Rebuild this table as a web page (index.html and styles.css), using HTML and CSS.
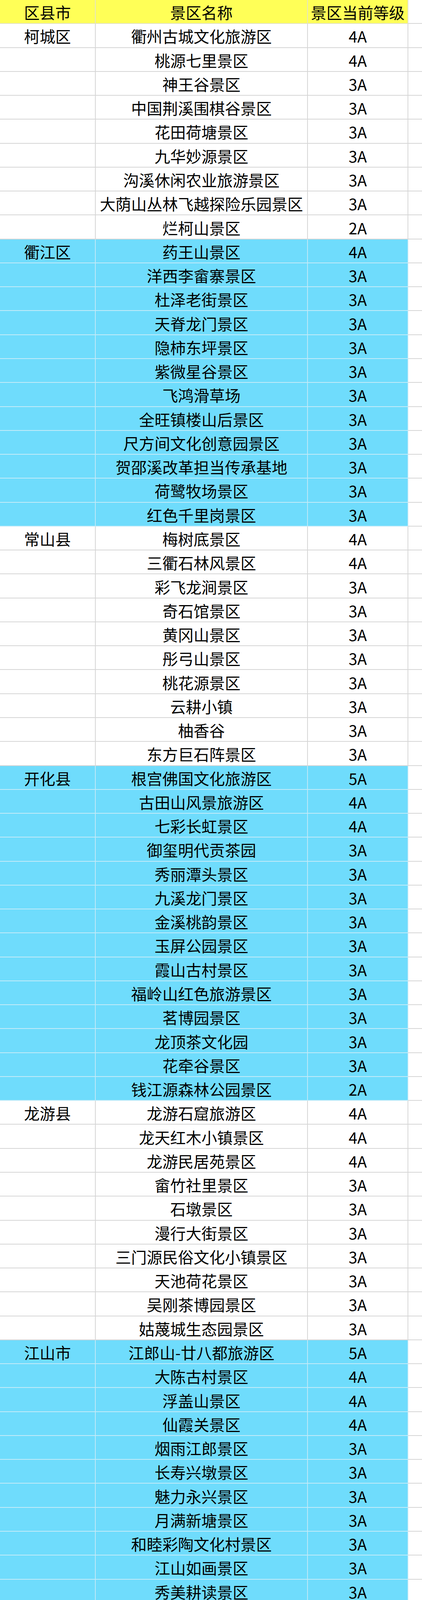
FILE: index.html
```html
<!DOCTYPE html>
<html lang="zh-CN">
<head>
<meta charset="utf-8">
<title>衢州景区等级</title>
<link rel="stylesheet" href="styles.css">
</head>
<body>
<div class="sheet">
  <div class="row head"><div class="c">区县市</div><div class="c">景区名称</div><div class="c">景区当前等级</div><div class="c x"></div></div>

  <div class="row"><div class="c">柯城区</div><div class="c">衢州古城文化旅游区</div><div class="c">4A</div><div class="c x"></div></div>
  <div class="row"><div class="c"></div><div class="c">桃源七里景区</div><div class="c">4A</div><div class="c x"></div></div>
  <div class="row"><div class="c"></div><div class="c">神王谷景区</div><div class="c">3A</div><div class="c x"></div></div>
  <div class="row"><div class="c"></div><div class="c">中国荆溪围棋谷景区</div><div class="c">3A</div><div class="c x"></div></div>
  <div class="row"><div class="c"></div><div class="c">花田荷塘景区</div><div class="c">3A</div><div class="c x"></div></div>
  <div class="row"><div class="c"></div><div class="c">九华妙源景区</div><div class="c">3A</div><div class="c x"></div></div>
  <div class="row"><div class="c"></div><div class="c">沟溪休闲农业旅游景区</div><div class="c">3A</div><div class="c x"></div></div>
  <div class="row"><div class="c"></div><div class="c">大荫山丛林飞越探险乐园景区</div><div class="c">3A</div><div class="c x"></div></div>
  <div class="row"><div class="c"></div><div class="c">烂柯山景区</div><div class="c">2A</div><div class="c x"></div></div>

  <div class="row blue"><div class="c">衢江区</div><div class="c">药王山景区</div><div class="c">4A</div><div class="c x"></div></div>
  <div class="row blue"><div class="c"></div><div class="c">洋西李畲寨景区</div><div class="c">3A</div><div class="c x"></div></div>
  <div class="row blue"><div class="c"></div><div class="c">杜泽老街景区</div><div class="c">3A</div><div class="c x"></div></div>
  <div class="row blue"><div class="c"></div><div class="c">天脊龙门景区</div><div class="c">3A</div><div class="c x"></div></div>
  <div class="row blue"><div class="c"></div><div class="c">隐柿东坪景区</div><div class="c">3A</div><div class="c x"></div></div>
  <div class="row blue"><div class="c"></div><div class="c">紫微星谷景区</div><div class="c">3A</div><div class="c x"></div></div>
  <div class="row blue"><div class="c"></div><div class="c">飞鸿滑草场</div><div class="c">3A</div><div class="c x"></div></div>
  <div class="row blue"><div class="c"></div><div class="c">全旺镇楼山后景区</div><div class="c">3A</div><div class="c x"></div></div>
  <div class="row blue"><div class="c"></div><div class="c">尺方间文化创意园景区</div><div class="c">3A</div><div class="c x"></div></div>
  <div class="row blue"><div class="c"></div><div class="c">贺邵溪改革担当传承基地</div><div class="c">3A</div><div class="c x"></div></div>
  <div class="row blue"><div class="c"></div><div class="c">荷鹭牧场景区</div><div class="c">3A</div><div class="c x"></div></div>
  <div class="row blue"><div class="c"></div><div class="c">红色千里岗景区</div><div class="c">3A</div><div class="c x"></div></div>

  <div class="row"><div class="c">常山县</div><div class="c">梅树底景区</div><div class="c">4A</div><div class="c x"></div></div>
  <div class="row"><div class="c"></div><div class="c">三衢石林风景区</div><div class="c">4A</div><div class="c x"></div></div>
  <div class="row"><div class="c"></div><div class="c">彩飞龙涧景区</div><div class="c">3A</div><div class="c x"></div></div>
  <div class="row"><div class="c"></div><div class="c">奇石馆景区</div><div class="c">3A</div><div class="c x"></div></div>
  <div class="row"><div class="c"></div><div class="c">黄冈山景区</div><div class="c">3A</div><div class="c x"></div></div>
  <div class="row"><div class="c"></div><div class="c">彤弓山景区</div><div class="c">3A</div><div class="c x"></div></div>
  <div class="row"><div class="c"></div><div class="c">桃花源景区</div><div class="c">3A</div><div class="c x"></div></div>
  <div class="row"><div class="c"></div><div class="c">云耕小镇</div><div class="c">3A</div><div class="c x"></div></div>
  <div class="row"><div class="c"></div><div class="c">柚香谷</div><div class="c">3A</div><div class="c x"></div></div>
  <div class="row"><div class="c"></div><div class="c">东方巨石阵景区</div><div class="c">3A</div><div class="c x"></div></div>

  <div class="row blue"><div class="c">开化县</div><div class="c">根宫佛国文化旅游区</div><div class="c">5A</div><div class="c x"></div></div>
  <div class="row blue"><div class="c"></div><div class="c">古田山风景旅游区</div><div class="c">4A</div><div class="c x"></div></div>
  <div class="row blue"><div class="c"></div><div class="c">七彩长虹景区</div><div class="c">4A</div><div class="c x"></div></div>
  <div class="row blue"><div class="c"></div><div class="c">御玺明代贡茶园</div><div class="c">3A</div><div class="c x"></div></div>
  <div class="row blue"><div class="c"></div><div class="c">秀丽潭头景区</div><div class="c">3A</div><div class="c x"></div></div>
  <div class="row blue"><div class="c"></div><div class="c">九溪龙门景区</div><div class="c">3A</div><div class="c x"></div></div>
  <div class="row blue"><div class="c"></div><div class="c">金溪桃韵景区</div><div class="c">3A</div><div class="c x"></div></div>
  <div class="row blue"><div class="c"></div><div class="c">玉屏公园景区</div><div class="c">3A</div><div class="c x"></div></div>
  <div class="row blue"><div class="c"></div><div class="c">霞山古村景区</div><div class="c">3A</div><div class="c x"></div></div>
  <div class="row blue"><div class="c"></div><div class="c">福岭山红色旅游景区</div><div class="c">3A</div><div class="c x"></div></div>
  <div class="row blue"><div class="c"></div><div class="c">茗博园景区</div><div class="c">3A</div><div class="c x"></div></div>
  <div class="row blue"><div class="c"></div><div class="c">龙顶茶文化园</div><div class="c">3A</div><div class="c x"></div></div>
  <div class="row blue"><div class="c"></div><div class="c">花牵谷景区</div><div class="c">3A</div><div class="c x"></div></div>
  <div class="row blue"><div class="c"></div><div class="c">钱江源森林公园景区</div><div class="c">2A</div><div class="c x"></div></div>

  <div class="row"><div class="c">龙游县</div><div class="c">龙游石窟旅游区</div><div class="c">4A</div><div class="c x"></div></div>
  <div class="row"><div class="c"></div><div class="c">龙天红木小镇景区</div><div class="c">4A</div><div class="c x"></div></div>
  <div class="row"><div class="c"></div><div class="c">龙游民居苑景区</div><div class="c">4A</div><div class="c x"></div></div>
  <div class="row"><div class="c"></div><div class="c">畲竹社里景区</div><div class="c">3A</div><div class="c x"></div></div>
  <div class="row"><div class="c"></div><div class="c">石墩景区</div><div class="c">3A</div><div class="c x"></div></div>
  <div class="row"><div class="c"></div><div class="c">漫行大街景区</div><div class="c">3A</div><div class="c x"></div></div>
  <div class="row"><div class="c"></div><div class="c">三门源民俗文化小镇景区</div><div class="c">3A</div><div class="c x"></div></div>
  <div class="row"><div class="c"></div><div class="c">天池荷花景区</div><div class="c">3A</div><div class="c x"></div></div>
  <div class="row"><div class="c"></div><div class="c">吴刚茶博园景区</div><div class="c">3A</div><div class="c x"></div></div>
  <div class="row"><div class="c"></div><div class="c">姑蔑城生态园景区</div><div class="c">3A</div><div class="c x"></div></div>

  <div class="row blue"><div class="c">江山市</div><div class="c">江郎山-廿八都旅游区</div><div class="c">5A</div><div class="c x"></div></div>
  <div class="row blue"><div class="c"></div><div class="c">大陈古村景区</div><div class="c">4A</div><div class="c x"></div></div>
  <div class="row blue"><div class="c"></div><div class="c">浮盖山景区</div><div class="c">4A</div><div class="c x"></div></div>
  <div class="row blue"><div class="c"></div><div class="c">仙霞关景区</div><div class="c">4A</div><div class="c x"></div></div>
  <div class="row blue"><div class="c"></div><div class="c">烟雨江郎景区</div><div class="c">3A</div><div class="c x"></div></div>
  <div class="row blue"><div class="c"></div><div class="c">长寿兴墩景区</div><div class="c">3A</div><div class="c x"></div></div>
  <div class="row blue"><div class="c"></div><div class="c">魅力永兴景区</div><div class="c">3A</div><div class="c x"></div></div>
  <div class="row blue"><div class="c"></div><div class="c">月满新塘景区</div><div class="c">3A</div><div class="c x"></div></div>
  <div class="row blue"><div class="c"></div><div class="c">和睦彩陶文化村景区</div><div class="c">3A</div><div class="c x"></div></div>
  <div class="row blue"><div class="c"></div><div class="c">江山如画景区</div><div class="c">3A</div><div class="c x"></div></div>
  <div class="row blue"><div class="c"></div><div class="c">秀美耕读景区</div><div class="c">3A</div><div class="c x"></div></div>
  <div class="row blue"><div class="c"></div><div class="c">南坞古村景区</div><div class="c">3A</div><div class="c x"></div></div>
  <div class="row blue"><div class="c"></div><div class="c">祈福圣地太阳山景区</div><div class="c">3A</div><div class="c x"></div></div>
  <div class="row blue"><div class="c"></div><div class="c">峡风瓷韵景区</div><div class="c">3A</div><div class="c x"></div></div>
  <div class="row blue"><div class="c"></div><div class="c">醉美碗窑景区</div><div class="c">3A</div><div class="c x"></div></div>
  <div class="row blue"><div class="c"></div><div class="c">清湖古镇景区</div><div class="c">3A</div><div class="c x"></div></div>
  <div class="row blue"><div class="c"></div><div class="c">桃园洪福景区</div><div class="c">3A</div><div class="c x"></div></div>
  <div class="row blue"><div class="c"></div><div class="c">青少年素质教育基地</div><div class="c">3A</div><div class="c x"></div></div>
  <div class="row blue"><div class="c"></div><div class="c">凤鸣早田景区</div><div class="c">3A</div><div class="c x"></div></div>

  <div class="row tail"><div class="c"></div><div class="c"></div><div class="c"></div><div class="c x"></div></div>
</div>
</body>
</html>
```
FILE: styles.css
```css
html, body {
  margin: 0;
  padding: 0;
  background: #ffffff;
}

.sheet {
  width: 1080px;
  height: 4631px;
  overflow: hidden;
  font-family: "Noto Sans CJK SC", "Noto Sans", sans-serif;
  font-size: 40px;
  color: #000000;
}

.row {
  display: grid;
  grid-template-columns: 245px 543px 257px 35px;
  height: 61.27px;
}

.row.tail {
  height: 36px;
}

.c {
  box-sizing: border-box;
  height: 100%;
  display: flex;
  align-items: center;
  justify-content: center;
  padding-top: 3px;
  line-height: 1;
  white-space: nowrap;
  border-right: 2px solid #d6d6d6;
  border-bottom: 2px solid #d6d6d6;
  background: #ffffff;
}

.tail .c {
  border-bottom: none;
}

.c.x {
  border-right: none;
  background: #ffffff;
}

.head .c {
  background: #ffff57;
  border-bottom-color: #e2e2c0;
  border-right-color: #e4e4c4;
}

.head .c.x {
  background: #ffffff;
  border-bottom-color: #d6d6d6;
}

.blue .c {
  background: #6fdcfc;
  border-right-color: #bfe9f7;
  border-bottom-color: #c4ebf8;
}

.blue .c.x {
  background: #ffffff;
  border-bottom-color: #d6d6d6;
}
```
